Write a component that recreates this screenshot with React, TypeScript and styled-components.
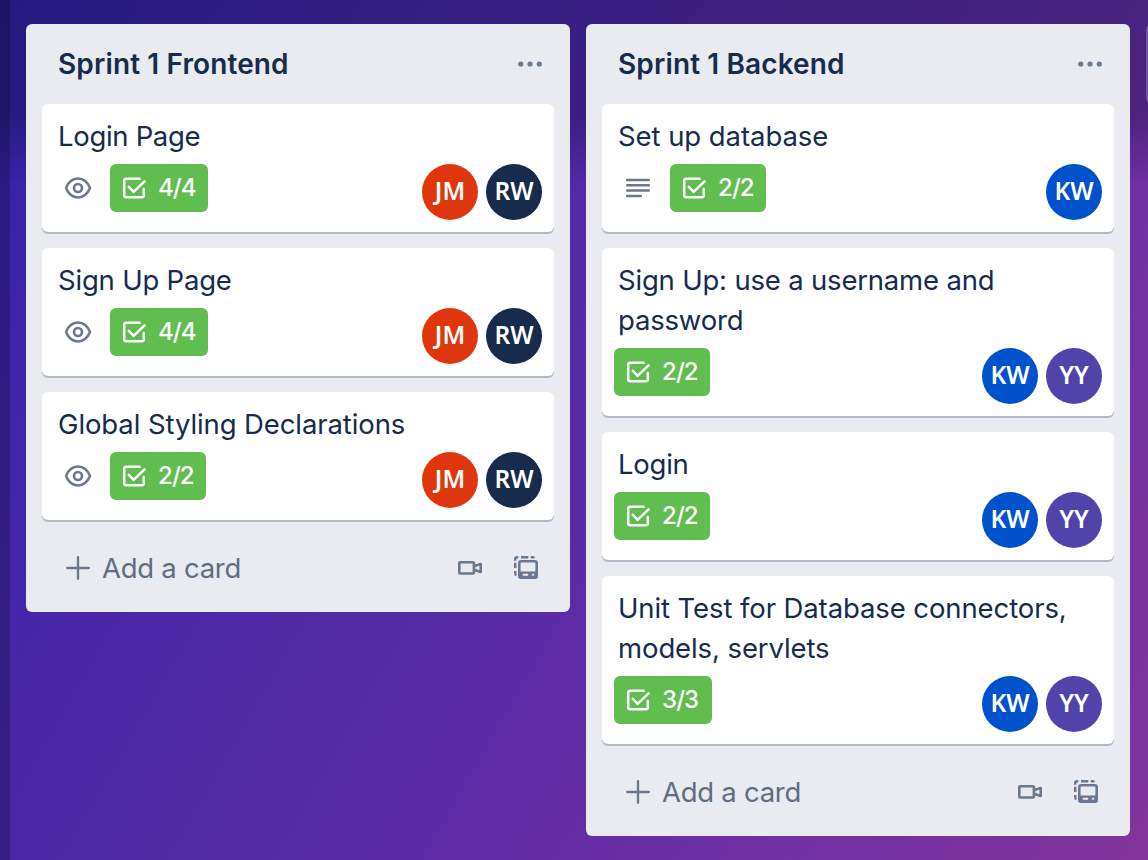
import React from "react";
import styled, { createGlobalStyle } from "styled-components";

const GlobalStyle = createGlobalStyle`
  * { box-sizing: border-box; }
  body {
    margin: 0;
    font-family: Inter, "Liberation Sans", sans-serif;
    color: #172b4d;
    overflow: hidden;
  }
`;

const Board = styled.main`
  display: flex;
  align-items: flex-start;
  gap: 16px;
  width: 100vw;
  height: 100vh;
  padding: 24px 0 0 26px;
  overflow: hidden;
  background:
    linear-gradient(90deg, rgba(10, 8, 40, 0.3) 0 10px, transparent 10px),
    linear-gradient(180deg, rgba(8, 10, 50, 0.32) 0, rgba(8, 10, 50, 0.32) 115px, transparent 185px),
    linear-gradient(120deg, #3421a8 0%, #4a28a8 30%, #5a2aa5 53%, #7030a3 77%, #83349c 100%);
`;

const List = styled.section`
  flex: 0 0 544px;
  display: flex;
  flex-direction: column;
  background: #eaebf0;
  border-radius: 6px;
  padding: 0 16px;
`;

const NextList = styled.div`
  flex: 0 0 544px;
  height: 80px;
  border-radius: 6px;
  background: rgba(255, 255, 255, 0.24);
`;

const ListHeader = styled.header`
  display: flex;
  align-items: center;
  justify-content: space-between;
  height: 80px;
  padding: 0 8px 0 16px;
`;

const ListTitle = styled.h2`
  margin: 0;
  font-size: 28px;
  font-weight: 600;
  line-height: 40px;
  letter-spacing: 0.12px;
  white-space: nowrap;
`;

const Cards = styled.div`
  display: flex;
  flex-direction: column;
  gap: 16px;
`;

const CardBox = styled.article`
  padding: 12px 12px 12px;
  background: #fff;
  border-radius: 6px;
  box-shadow: 0 2px 0 #b3b9c7;
`;

const CardTitle = styled.div<{ $tracking: number }>`
  padding: 0 4px;
  font-size: 27.5px;
  line-height: 40px;
  letter-spacing: ${(p) => p.$tracking}px;
`;

const CardMeta = styled.div`
  display: flex;
  align-items: flex-start;
  gap: 8px;
  height: 56px;
  margin-top: 8px;
`;

const Badge = styled.div<{ $width: number }>`
  display: flex;
  align-items: center;
  width: ${(p) => p.$width}px;
  height: 48px;
  border-radius: 6px;
  background: #61bd4f;
  color: #fff;
`;

const Count = styled.span`
  padding-bottom: 2px;
  font-size: 24px;
  font-weight: 500;
  letter-spacing: -0.9px;
  white-space: nowrap;
`;

const Members = styled.div`
  display: flex;
  gap: 8px;
  margin-left: auto;
`;

const Avatar = styled.div<{ $color: string }>`
  width: 56px;
  height: 56px;
  border-radius: 50%;
  background: ${(p) => p.$color};
  color: #fff;
  font-family: "Noto Sans", "Open Sans", sans-serif;
  font-size: 24.5px;
  font-weight: 600;
  line-height: 54px;
  text-align: center;
`;

const ListFooter = styled.footer`
  display: flex;
  align-items: center;
  height: 92px;
  padding: 4px 0 0 12px;
  color: #5e6c84;
`;

const AddLabel = styled.span`
  flex: 1;
  font-size: 27.5px;
  line-height: 40px;
  letter-spacing: -0.27px;
`;

const Glyph = styled.svg`
  display: block;
  flex: none;
  fill: none;
  stroke: currentColor;
  stroke-width: 2.5;
  stroke-linecap: round;
  stroke-linejoin: round;
`;

const MutedGlyph = styled(Glyph)`
  color: #6b778c;
`;

const Eye = () => (
  <MutedGlyph width="48" height="48">
    <path d="M12 24C14.5 18 19 14.6 24 14.6S33.5 18 36 24C33.5 30 29 33.4 24 33.4S14.5 30 12 24Z" />
    <circle cx="24" cy="24" r="4" strokeWidth="2.7" />
  </MutedGlyph>
);

const Description = () => (
  <MutedGlyph width="48" height="48">
    <path d="M13.2 16H34.8M13.2 21.3H34.8M13.2 26.6H34.8M13.2 32H26.8" />
  </MutedGlyph>
);

const Check = () => (
  <Glyph width="48" height="48">
    <path d="M29.6 14.7H16.2a2 2 0 0 0-2 2V31.3a2 2 0 0 0 2 2H31.8a2 2 0 0 0 2-2V25" />
    <path d="M18.8 22.8L23.6 27.8L34.5 17.4" />
  </Glyph>
);

const More = () => (
  <MutedGlyph width="32" height="32">
    <g fill="currentColor" stroke="none">
      <circle cx="6.7" cy="16" r="2.6" />
      <circle cx="16" cy="16" r="2.6" />
      <circle cx="25.3" cy="16" r="2.6" />
    </g>
  </MutedGlyph>
);

const Plus = () => (
  <MutedGlyph width="48" height="48">
    <path d="M24 13.2V34.8M13.2 24H34.8" strokeWidth="2.3" />
  </MutedGlyph>
);

const Video = () => (
  <MutedGlyph width="56" height="48">
    <rect x="17.3" y="18.3" width="14.6" height="11.2" rx="1" strokeWidth="2.6" />
    <path d="M32.5 22L38.7 20V28L32.5 26" strokeWidth="2.6" />
  </MutedGlyph>
);

const Template = () => (
  <MutedGlyph width="56" height="48">
    <path
      d="M17.2 16.7V15.2a2 2 0 0 1 2-2H20.3M23 13.2H30.3M32.8 13.2H34.6a2 2 0 0 1 1.7 1M17.2 18.8V24M17.2 27V29.4a2 2 0 0 0 1.2 1.8"
      strokeWidth="2.4"
      strokeLinecap="butt"
    />
    <rect x="21.3" y="17.3" width="17.4" height="16.5" rx="2" strokeWidth="2.6" />
    <path d="M21.3 28.2H38.7V33.5H21.3Z" fill="currentColor" strokeWidth="1.4" />
    <path d="M25.6 30.8h3.8M34.9 30.8h.4" stroke="#ebecf0" strokeWidth="2" />
  </MutedGlyph>
);

const memberColors: Record<string, string> = {
  JM: "#df360d",
  RW: "#172b4d",
  KW: "#0052cc",
  YY: "#5243aa",
};

type CardData = {
  title: string;
  checks: string;
  members: string[];
  icon?: "eye" | "description";
  tracking?: number;
};

const lists: { title: string; cards: CardData[] }[] = [
  {
    title: "Sprint 1 Frontend",
    cards: [
      { title: "Login Page", checks: "4/4", members: ["JM", "RW"], icon: "eye", tracking: -0.32 },
      { title: "Sign Up Page", checks: "4/4", members: ["JM", "RW"], icon: "eye", tracking: -0.2 },
      { title: "Global Styling Declarations", checks: "2/2", members: ["JM", "RW"], icon: "eye" },
    ],
  },
  {
    title: "Sprint 1 Backend",
    cards: [
      { title: "Set up database", checks: "2/2", members: ["KW"], icon: "description", tracking: -0.06 },
      { title: "Sign Up: use a username and password", checks: "2/2", members: ["KW", "YY"], tracking: -0.19 },
      { title: "Login", checks: "2/2", members: ["KW", "YY"], tracking: -0.25 },
      { title: "Unit Test for Database connectors, models, servlets", checks: "3/3", members: ["KW", "YY"] },
    ],
  },
];

const Card = ({ title, checks, members, icon, tracking = -0.1 }: CardData) => (
  <CardBox>
    <CardTitle $tracking={tracking}>{title}</CardTitle>
    <CardMeta>
      {icon === "eye" && <Eye />}
      {icon === "description" && <Description />}
      <Badge $width={checks === "2/2" ? 96 : 98}>
        <Check />
        <Count>{checks}</Count>
      </Badge>
      <Members>
        {members.map((m) => (
          <Avatar key={m} $color={memberColors[m]}>
            {m}
          </Avatar>
        ))}
      </Members>
    </CardMeta>
  </CardBox>
);

export default function App() {
  return (
    <>
      <GlobalStyle />
      <Board>
        {lists.map((list) => (
          <List key={list.title}>
            <ListHeader>
              <ListTitle>{list.title}</ListTitle>
              <More />
            </ListHeader>
            <Cards>
              {list.cards.map((card) => (
                <Card key={card.title} {...card} />
              ))}
            </Cards>
            <ListFooter>
              <Plus />
              <AddLabel>Add a card</AddLabel>
              <Video />
              <Template />
            </ListFooter>
          </List>
        ))}
        <NextList />
      </Board>
    </>
  );
}
